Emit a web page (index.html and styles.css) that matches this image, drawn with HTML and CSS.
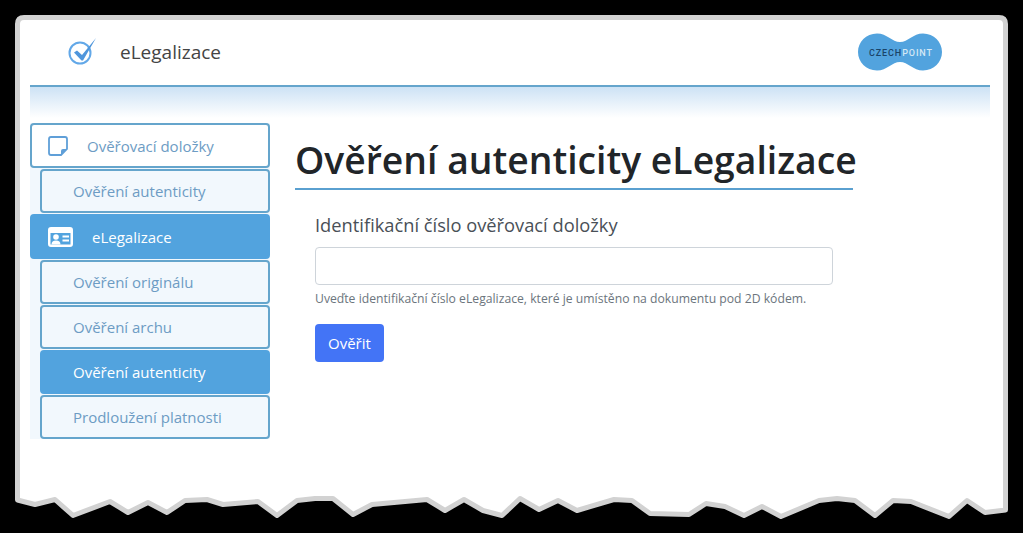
FILE: index.html
```html
<!DOCTYPE html>
<html lang="cs">
<head>
  <meta charset="UTF-8">
  <title>eLegalizace</title>
  <link rel="stylesheet" href="styles.css">
</head>
<body>
  <svg class="paper" width="1023" height="533" viewBox="0 0 1023 533">
    <path class="paper-edge" d="M17.5 24 Q17.5 17.5 24 17.5 L999 17.5 Q1005.500 17.5 1005.500 24 L1005.500 510 L985 512.500 L967 500.500 L949 516.500 L911 501.500 L893 500.500 L875 515.500 L855 500.500 L837 498.500 L819 500.500 L781 516.500 L762 506.500 L744 515.500 L725 506.500 L706 503.500 L689 514.500 L650 513.500 L632 500.500 L614 499.500 L577 510.500 L558 500.500 L539 509.500 L520 498.500 L502 515.500 L483 510.500 L464 499.500 L445 510.500 L427 499.500 L372 504.500 L353 514.500 L333 498.500 L315 498.500 L297 500.500 L277 515.500 L258 501.500 L223 504.500 L207 499.500 L185 500.500 L167 512.500 L148 502.500 L128 512.500 L110 501.500 L73 515.500 L55 499.500 L35 504.500 L17.500 500 Z"/>
  </svg>

  <div class="app">
    <header class="topbar">
      <div class="brand">
        <svg class="brand-icon" width="30" height="30" viewBox="0 0 30 30">
          <circle cx="13" cy="16" r="10.500" fill="none" stroke="#62a8e8" stroke-width="2"/>
          <path d="M7 15.500 L10 13.500 L15 18 L29 1 L16 23.500 L14.500 23.500 Z" fill="#4f96dc"/>
        </svg>
        <span class="brand-name">eLegalizace</span>
      </div>
      <svg class="logo" width="84" height="38" viewBox="0 0 84 38">
        <path d="M19 0.500 C29 0.500 34 9 42 9 C50 9 55 0.500 65 0.500 C76 0.500 84 9 84 19 C84 29 76 37.500 65 37.500 C55 37.500 50 29 42 29 C34 29 29 37.500 19 37.500 C8 37.500 0 29 0 19 C0 9 8 0.500 19 0.500 Z" fill="#52a3de"/>
        <text class="logo-text" x="11" y="22.500"><tspan class="logo-dark">CZECH</tspan><tspan class="logo-light">POINT</tspan></text>
      </svg>
    </header>
    <div class="fade"></div>

    <div class="main">
      <nav class="sidebar">
        <a class="nav-item nav-top">
          <svg class="nav-icon" width="20" height="20" viewBox="0 0 20 20">
            <path d="M3 1 H17 Q19 1 19 3 V13 L13 19 H3 Q1 19 1 17 V3 Q1 1 3 1 Z" fill="none" stroke="#5f9fd8" stroke-width="1.800"/>
            <path d="M19 13 H15 Q13 13 13 15 V19 Z" fill="#5f9fd8"/>
          </svg>
          <span>Ověřovací doložky</span>
        </a>
        <a class="nav-item nav-sub">Ověření autenticity</a>
        <a class="nav-item nav-top nav-active">
          <svg class="nav-icon nav-icon-wide" width="25" height="20" viewBox="0 0 25 20">
            <path fill-rule="evenodd" fill="#fff" d="M3 0 H22 Q25 0 25 3 V17 Q25 20 22 20 H3 Q0 20 0 17 V3 Q0 0 3 0 Z M2.500 6 V17.500 H22.500 V6 Z"/>
            <circle cx="8" cy="10" r="2.800" fill="#fff"/>
            <path d="M3.500 17.500 Q3.500 13.500 8 13.500 Q12.500 13.500 12.500 17.500 Z" fill="#fff"/>
            <path d="M14.500 8.500 H21 V10.500 H14.500 Z M14.500 12.500 H21 V14.500 H14.500 Z" fill="#fff"/>
          </svg>
          <span>eLegalizace</span>
        </a>
        <a class="nav-item nav-sub">Ověření originálu</a>
        <a class="nav-item nav-sub">Ověření archu</a>
        <a class="nav-item nav-sub nav-active">Ověření autenticity</a>
        <a class="nav-item nav-sub">Prodloužení platnosti</a>
      </nav>

      <section class="content">
        <h1>Ověření autenticity eLegalizace</h1>
        <form class="verify-form">
          <label for="code">Identifikační číslo ověřovací doložky</label>
          <input type="text" id="code">
          <small>Uveďte identifikační číslo eLegalizace, které je umístěno na dokumentu pod 2D kódem.</small>
          <button type="button">Ověřit</button>
        </form>
      </section>
    </div>
  </div>
</body>
</html>
```

FILE: styles.css
```css
html, body {
  height: 100%;
}
body {
  margin: 0;
  background: #000;
  font-family: "Open Sans", "Noto Sans", sans-serif;
  overflow: hidden;
}
.paper {
  position: absolute;
  top: 0;
  left: 0;
}
.paper-edge {
  fill: #fff;
  stroke: #d2d2d2;
  stroke-width: 5;
  stroke-linejoin: round;
}
.app {
  position: relative;
  width: 960px;
  margin-left: 30px;
}
.topbar {
  display: flex;
  justify-content: space-between;
  align-items: center;
  box-sizing: border-box;
  height: 87px;
  padding: 18px 48px 0 37px;
  border-bottom: 2px solid #65a5cc;
}
.brand {
  display: flex;
  align-items: center;
  gap: 23px;
}
.brand-name {
  font-size: 19px;
  color: #444;
}
.logo-text {
  font-family: Roboto, sans-serif;
  font-size: 9px;
  font-weight: 500;
  letter-spacing: 0.9px;
}
.logo-dark {
  fill: #1a4468;
}
.logo-light {
  fill: #d5e8f5;
}
.fade {
  height: 31px;
  background: linear-gradient(#cde2f5, #fff);
}
.main {
  display: flex;
  margin-top: 5px;
}
.sidebar {
  display: flex;
  flex-direction: column;
  gap: 1px;
  width: 240px;
  flex: none;
  background: #f2f8fd;
}
.nav-item {
  display: flex;
  align-items: center;
  box-sizing: border-box;
  height: 44px;
  border: 2px solid #65a5cc;
  border-radius: 4px;
  font-size: 15px;
  color: #6d9cc4;
  background: #f2f8fd;
}
.nav-top {
  height: 45px;
  padding-left: 16px;
  background: #fff;
}
.nav-top span {
  margin-left: 19px;
}
.nav-sub {
  margin-left: 10px;
  padding-left: 31px;
}
.nav-active {
  border-color: #52a3de;
  background: #52a3de;
  color: #fff;
}
.nav-icon {
  flex: none;
}
.content {
  padding: 11px 0 0 25px;
}
h1 {
  box-sizing: border-box;
  width: 558px;
  margin: 0;
  padding-bottom: 2px;
  border-bottom: 2px solid #5aa0d0;
  font-size: 37.300px;
  font-weight: 600;
  line-height: 52px;
  color: #212529;
  white-space: nowrap;
}
.verify-form {
  display: flex;
  flex-direction: column;
  align-items: flex-start;
  width: 518px;
  padding: 23px 0 0 20px;
}
label {
  font-size: 18.300px;
  line-height: 24px;
  color: #495057;
}
input {
  box-sizing: border-box;
  width: 518px;
  height: 38px;
  margin-top: 10px;
  border: 1px solid #ced4da;
  border-radius: 4px;
}
small {
  margin-top: 6px;
  font-size: 12.200px;
  line-height: 16px;
  color: #6c757d;
  white-space: nowrap;
}
button {
  height: 38px;
  margin-top: 17px;
  padding: 0 13px;
  border: none;
  border-radius: 4px;
  background: #4374f6;
  color: #fff;
  font-family: inherit;
  font-size: 15px;
}
```
